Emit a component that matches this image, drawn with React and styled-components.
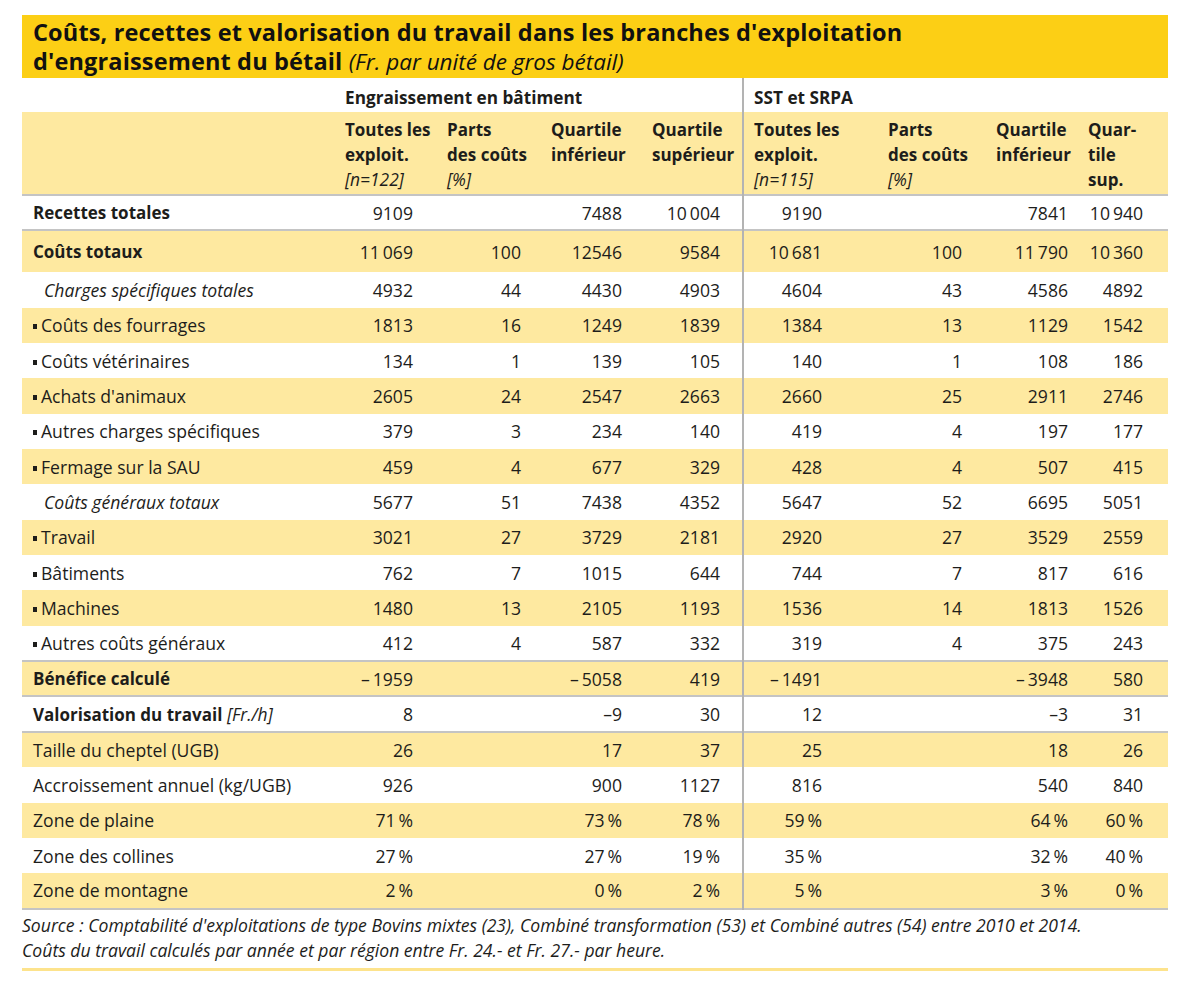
import React from "react";
import styled, { createGlobalStyle } from "styled-components";

const Global = createGlobalStyle`
  html, body { margin: 0; padding: 0; background: #fff; }
  body { font-family: "Open Sans", Lato, sans-serif; color: #1d1d1b; }
`;

const Page = styled.div`
  width: 1146px;
  padding: 15px 0 0 22px;
`;

const TitleBand = styled.div`
  background: #fccf15;
  padding: 3px 11px 4px 11px;
  height: 63px;
  box-sizing: border-box;
`;

const Title = styled.h1`
  margin: 0;
  font-size: 23.5px;
  line-height: 29px;
  letter-spacing: 0.15px;
  font-weight: 700;
  color: #111;
`;

const TitleUnit = styled.span`
  font-weight: 400;
  font-style: italic;
  font-size: 22.5px;
  letter-spacing: 0;
`;

const Table = styled.table`
  width: 1146px;
  border-collapse: collapse;
  table-layout: fixed;
  font-size: 17.6px;
`;

const GroupRow = styled.tr`
  height: 34px;
`;

const GroupCell = styled.th`
  text-align: left;
  font-weight: 700;
  font-size: 17.2px;
  padding: 4px 0 0 ${(p) => p.$pad || 5}px;
  vertical-align: middle;
  border-left: ${(p) => (p.$divider ? "2px solid #b3b3b3" : "none")};
`;

const HeadRow = styled.tr`
  background: #fee9a0;
  height: 83px;
  border-bottom: 2px solid #c4c4c4;
`;

const HeadCell = styled.th`
  text-align: left;
  vertical-align: top;
  font-weight: 700;
  font-size: 17px;
  line-height: 25px;
  padding: 5px 0 0 ${(p) => p.$pad || 5}px;
  border-left: ${(p) => (p.$divider ? "2px solid #b3b3b3" : "none")};
`;

const HeadNote = styled.span`
  display: block;
  font-weight: 400;
  font-style: italic;
  font-size: 17.4px;
`;

const BodyRow = styled.tr`
  height: ${(p) => (p.$tall ? 42 : 35.35)}px;
  background: ${(p) => (p.$shade ? "#fee9a0" : "#fff")};
  border-bottom: ${(p) => (p.$line ? "2px solid #c4c4c4" : "none")};
`;

const LabelCell = styled.td`
  padding: 0 0 0 ${(p) => (p.$kind === "sub" ? 22 : 11)}px;
  font-weight: ${(p) => (p.$kind === "bold" ? 700 : 400)};
  font-size: ${(p) => (p.$kind === "bold" ? "17px" : "inherit")};
  font-style: ${(p) => (p.$kind === "sub" ? "italic" : "normal")};
  white-space: nowrap;
  vertical-align: middle;
`;

const Bullet = styled.span`
  display: inline-block;
  width: 4px;
  height: 5px;
  background: #1d1d1b;
  margin-right: 4px;
  vertical-align: 3px;
`;

const Unit = styled.span`
  font-weight: 400;
  font-style: italic;
  font-size: 17.4px;
`;

const NumCell = styled.td`
  text-align: right;
  padding: 0 ${(p) => p.$right}px 0 0;
  white-space: nowrap;
  vertical-align: middle;
  border-left: ${(p) => (p.$divider ? "2px solid #b3b3b3" : "none")};
`;

const Footer = styled.div`
  padding: 3px 0 0 0;
  font-style: italic;
  font-size: 17.6px;
  line-height: 25px;
`;

const BottomRule = styled.div`
  margin-top: 5px;
  height: 3px;
  background: #fde38c;
`;

const cols = [
  { w: 318 },
  { w: 102, r: 29, pad: 5 },
  { w: 104, r: 25, pad: 5 },
  { w: 101, r: 25, pad: 5 },
  { w: 96, r: 22, pad: 5 },
  { w: 140, r: 61, pad: 10, divider: true },
  { w: 108, r: 29, pad: 5 },
  { w: 92, r: 15, pad: 5 },
  { w: 85, r: 25, pad: 5 },
];

const T = "\u2009";
const M = "\u2013";

const heads = [
  ["Toutes les", "exploit.", "[n=122]"],
  ["Parts", "des coûts", "[%]"],
  ["Quartile", "inférieur"],
  ["Quartile", "supérieur"],
  ["Toutes les", "exploit.", "[n=115]"],
  ["Parts", "des coûts", "[%]"],
  ["Quartile", "inférieur"],
  ["Quar-", "tile", "sup."],
];

const rows = [
  { label: "Recettes totales", kind: "bold", line: true, v: ["9109", "", "7488", `10${T}004`, "9190", "", "7841", `10${T}940`] },
  { label: "Coûts totaux", kind: "bold", tall: true, v: [`11${T}069`, "100", "12546", "9584", `10${T}681`, "100", `11${T}790`, `10${T}360`] },
  { label: "Charges spécifiques totales", kind: "sub", v: ["4932", "44", "4430", "4903", "4604", "43", "4586", "4892"] },
  { label: "Coûts des fourrages", kind: "item", v: ["1813", "16", "1249", "1839", "1384", "13", "1129", "1542"] },
  { label: "Coûts vétérinaires", kind: "item", v: ["134", "1", "139", "105", "140", "1", "108", "186"] },
  { label: "Achats d'animaux", kind: "item", v: ["2605", "24", "2547", "2663", "2660", "25", "2911", "2746"] },
  { label: "Autres charges spécifiques", kind: "item", v: ["379", "3", "234", "140", "419", "4", "197", "177"] },
  { label: "Fermage sur la SAU", kind: "item", v: ["459", "4", "677", "329", "428", "4", "507", "415"] },
  { label: "Coûts généraux totaux", kind: "sub", v: ["5677", "51", "7438", "4352", "5647", "52", "6695", "5051"] },
  { label: "Travail", kind: "item", v: ["3021", "27", "3729", "2181", "2920", "27", "3529", "2559"] },
  { label: "Bâtiments", kind: "item", v: ["762", "7", "1015", "644", "744", "7", "817", "616"] },
  { label: "Machines", kind: "item", v: ["1480", "13", "2105", "1193", "1536", "14", "1813", "1526"] },
  { label: "Autres coûts généraux", kind: "item", line: true, v: ["412", "4", "587", "332", "319", "4", "375", "243"] },
  { label: "Bénéfice calculé", kind: "bold", line: true, v: [`${M}${T}1959`, "", `${M}${T}5058`, "419", `${M}${T}1491`, "", `${M}${T}3948`, "580"] },
  { label: "Valorisation du travail", unit: "[Fr./h]", kind: "bold", line: true, v: ["8", "", `${M}9`, "30", "12", "", `${M}3`, "31"] },
  { label: "Taille du cheptel (UGB)", kind: "plain", v: ["26", "", "17", "37", "25", "", "18", "26"] },
  { label: "Accroissement annuel (kg/UGB)", kind: "plain", v: ["926", "", "900", "1127", "816", "", "540", "840"] },
  { label: "Zone de plaine", kind: "plain", v: [`71${T}%`, "", `73${T}%`, `78${T}%`, `59${T}%`, "", `64${T}%`, `60${T}%`] },
  { label: "Zone des collines", kind: "plain", v: [`27${T}%`, "", `27${T}%`, `19${T}%`, `35${T}%`, "", `32${T}%`, `40${T}%`] },
  { label: "Zone de montagne", kind: "plain", line: true, v: [`2${T}%`, "", `0${T}%`, `2${T}%`, `5${T}%`, "", `3${T}%`, `0${T}%`] },
];

export default function App() {
  return (
    <Page>
      <Global />
      <TitleBand>
        <Title>
          Coûts, recettes et valorisation du travail dans les branches d'exploitation
          <br />
          d'engraissement du bétail <TitleUnit>(Fr. par unité de gros bétail)</TitleUnit>
        </Title>
      </TitleBand>
      <Table>
        <colgroup>
          {cols.map((c, i) => (
            <col key={i} style={{ width: c.w }} />
          ))}
        </colgroup>
        <thead>
          <GroupRow>
            <GroupCell />
            <GroupCell colSpan={4} $pad={5}>Engraissement en bâtiment</GroupCell>
            <GroupCell colSpan={4} $pad={10} $divider>SST et SRPA</GroupCell>
          </GroupRow>
          <HeadRow>
            <HeadCell />
            {heads.map((h, i) => {
              const c = cols[i + 1];
              const noteIdx = h[2] && h[2].startsWith("[") ? 2 : -1;
              return (
                <HeadCell key={i} $pad={c.pad} $divider={c.divider}>
                  {h.map((line, j) =>
                    j === noteIdx ? (
                      <HeadNote key={j}>{line}</HeadNote>
                    ) : (
                      <React.Fragment key={j}>
                        {line}
                        {j < h.length - 1 && <br />}
                      </React.Fragment>
                    )
                  )}
                </HeadCell>
              );
            })}
          </HeadRow>
        </thead>
        <tbody>
          {rows.map((r, i) => (
            <BodyRow key={i} $shade={i % 2 === 1} $line={r.line} $tall={r.tall}>
              <LabelCell $kind={r.kind}>
                {r.kind === "item" && <Bullet />}
                {r.label}
                {r.unit && <Unit> {r.unit}</Unit>}
              </LabelCell>
              {r.v.map((val, j) => {
                const c = cols[j + 1];
                return (
                  <NumCell key={j} $right={c.r} $divider={c.divider}>
                    {val}
                  </NumCell>
                );
              })}
            </BodyRow>
          ))}
        </tbody>
      </Table>
      <Footer>
        Source : Comptabilité d'exploitations de type Bovins mixtes (23), Combiné transformation (53) et Combiné autres (54) entre 2010 et 2014.
        <br />
        Coûts du travail calculés par année et par région entre Fr. 24.- et Fr. 27.- par heure.
      </Footer>
      <BottomRule />
    </Page>
  );
}
